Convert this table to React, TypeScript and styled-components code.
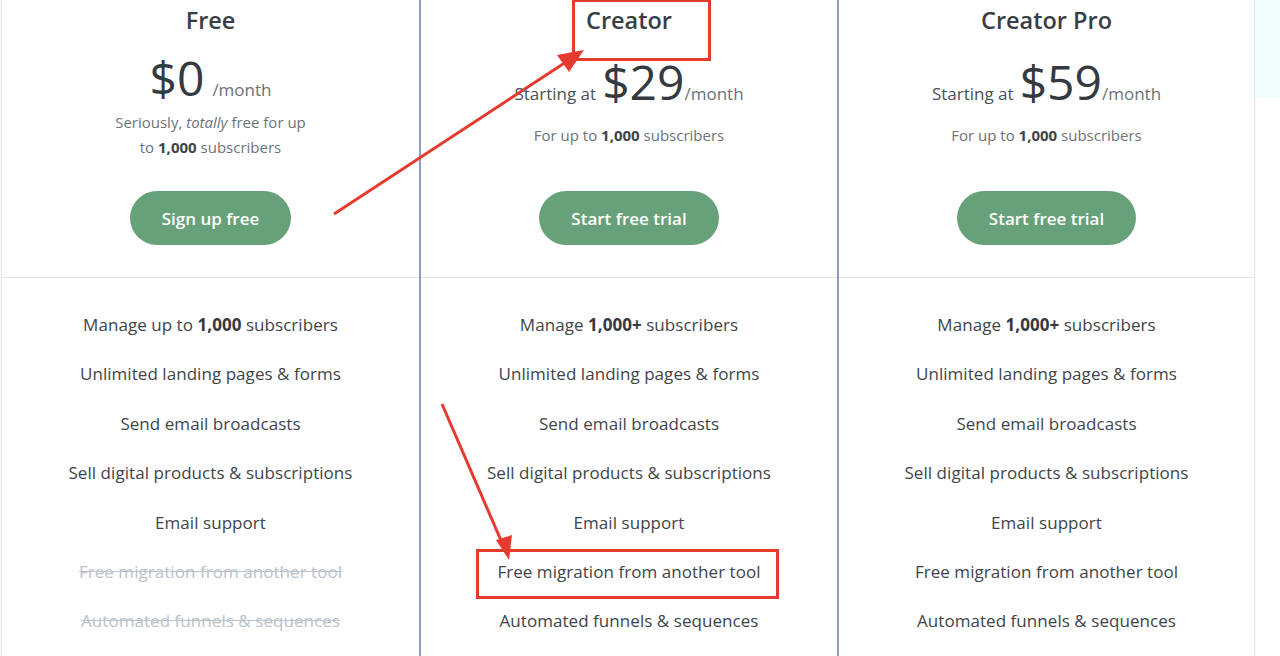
import React from "react";
import styled, { createGlobalStyle } from "styled-components";

const Global = createGlobalStyle`
  html, body { margin: 0; padding: 0; background: #ffffff; }
  body { font-family: "Open Sans", "Noto Sans", sans-serif; color: #3d4449; }
  * { box-sizing: border-box; }
`;

const Page = styled.div`
  position: relative;
  width: 1280px;
  height: 656px;
  overflow: hidden;
  display: flex;
  padding-left: 1px;
`;

const Grid = styled.div`
  display: grid;
  grid-template-columns: 418px 418px 418px;
`;

const Column = styled.div<{ $accent?: boolean; $last?: boolean }>`
  display: flex;
  flex-direction: column;
  border-left: ${(p) => (p.$accent ? "2px solid #8e9bcb" : "1px solid #dfe4ea")};
  border-right: ${(p) => (p.$last ? "1px solid #dfe4ea" : "none")};
`;

const Header = styled.div`
  height: 278px;
  display: flex;
  flex-direction: column;
  align-items: center;
  padding: 5px 0 32px;
  border-bottom: 1px solid #dfe6ea;
`;

const Title = styled.h2`
  margin: 0;
  font-size: 23.5px;
  line-height: 30px;
  font-weight: 600;
  color: #383e44;
`;

const PriceRow = styled.div<{ $top: number }>`
  margin-top: ${(p) => p.$top}px;
  display: flex;
  align-items: baseline;
  line-height: 48px;
`;

const Lead = styled.span`
  font-size: 17px;
  color: #4a5157;
  margin-right: 6px;
`;

const Amount = styled.span`
  font-size: 48px;
  color: #343a40;
  font-weight: 400;
`;

const Per = styled.span<{ $space?: boolean }>`
  font-size: 17px;
  color: #6b7176;
  margin-left: ${(p) => (p.$space ? "8px" : "0")};
`;

const Desc = styled.p<{ $gap: number }>`
  margin: ${(p) => p.$gap}px 0 0;
  font-size: 15px;
  line-height: 25px;
  color: #6d7378;
  text-align: center;
  b { color: #3d4449; font-weight: 700; }
  em { font-style: italic; }
`;

const Button = styled.button`
  margin-top: auto;
  height: 54px;
  padding: 0 32px;
  border: none;
  border-radius: 27px;
  background: #67a17a;
  color: #ffffff;
  font-family: "Open Sans", sans-serif;
  font-size: 17px;
  font-weight: 600;
  cursor: pointer;
`;

const Features = styled.ul`
  list-style: none;
  margin: 0;
  padding: 22px 0 0;
`;

const Feature = styled.li<{ $off?: boolean }>`
  padding: 12px 0;
  line-height: 25.4px;
  font-size: 17px;
  letter-spacing: 0.05px;
  text-align: center;
  color: ${(p) => (p.$off ? "#b9c2c9" : "#3e4549")};
  text-decoration: ${(p) => (p.$off ? "line-through" : "none")};
  b { font-weight: 700; color: #343a40; }
`;

const Aside = styled.div`
  flex: 1;
`;

const Tint = styled.div`
  height: 98px;
  background: #effdfd;
`;

const Overlay = styled.svg`
  position: absolute;
  left: 0;
  top: 0;
  pointer-events: none;
`;

type Plan = {
  name: string;
  lead?: string;
  amount: string;
  perSpace?: boolean;
  top: number;
  gap: number;
  desc: React.ReactNode;
  cta: string;
  accent?: boolean;
  last?: boolean;
  features: { label: React.ReactNode; off?: boolean }[];
};

const common = [
  { label: "Unlimited landing pages & forms" },
  { label: "Send email broadcasts" },
  { label: "Sell digital products & subscriptions" },
  { label: "Email support" },
];

const plans: Plan[] = [
  {
    name: "Free",
    amount: "$0",
    perSpace: true,
    top: 19,
    gap: -4,
    desc: (
      <>
        Seriously, <em>totally</em> free for up
        <br />
        to <b>1,000</b> subscribers
      </>
    ),
    cta: "Sign up free",
    features: [
      { label: <>Manage up to <b>1,000</b> subscribers</> },
      ...common,
      { label: "Free migration from another tool", off: true },
      { label: "Automated funnels & sequences", off: true },
    ],
  },
  {
    name: "Creator",
    lead: "Starting at",
    amount: "$29",
    top: 23,
    gap: 5,
    desc: (
      <>
        For up to <b>1,000</b> subscribers
      </>
    ),
    cta: "Start free trial",
    accent: true,
    features: [
      { label: <>Manage <b>1,000+</b> subscribers</> },
      ...common,
      { label: "Free migration from another tool" },
      { label: "Automated funnels & sequences" },
    ],
  },
  {
    name: "Creator Pro",
    lead: "Starting at",
    amount: "$59",
    top: 23,
    gap: 5,
    desc: (
      <>
        For up to <b>1,000</b> subscribers
      </>
    ),
    cta: "Start free trial",
    accent: true,
    last: true,
    features: [
      { label: <>Manage <b>1,000+</b> subscribers</> },
      ...common,
      { label: "Free migration from another tool" },
      { label: "Automated funnels & sequences" },
    ],
  },
];

export default function App() {
  return (
    <>
      <Global />
      <Page>
        <Grid>
          {plans.map((p) => (
            <Column key={p.name} $accent={p.accent} $last={p.last}>
              <Header>
                <Title>{p.name}</Title>
                <PriceRow $top={p.top}>
                  {p.lead && <Lead>{p.lead}</Lead>}
                  <Amount>{p.amount}</Amount>
                  <Per $space={p.perSpace}>/month</Per>
                </PriceRow>
                <Desc $gap={p.gap}>{p.desc}</Desc>
                <Button>{p.cta}</Button>
              </Header>
              <Features>
                {p.features.map((f, i) => (
                  <Feature key={i} $off={f.off}>
                    {f.label}
                  </Feature>
                ))}
              </Features>
            </Column>
          ))}
        </Grid>
        <Aside>
          <Tint />
        </Aside>
        <Overlay width="1280" height="656" viewBox="0 0 1280 656">
          <g stroke="#e63a2e" strokeWidth="3" fill="none">
            <rect x="573.5" y="0.5" width="136" height="59" />
            <rect x="477.5" y="550.5" width="300" height="47" />
            <line x1="334" y1="214" x2="566" y2="62" />
            <line x1="442" y1="404" x2="503" y2="545" />
          </g>
          <g fill="#e63a2e">
            <polygon points="584,50 557,55 569,72" />
            <polygon points="509,560 496,540 512,535" />
          </g>
        </Overlay>
      </Page>
    </>
  );
}
